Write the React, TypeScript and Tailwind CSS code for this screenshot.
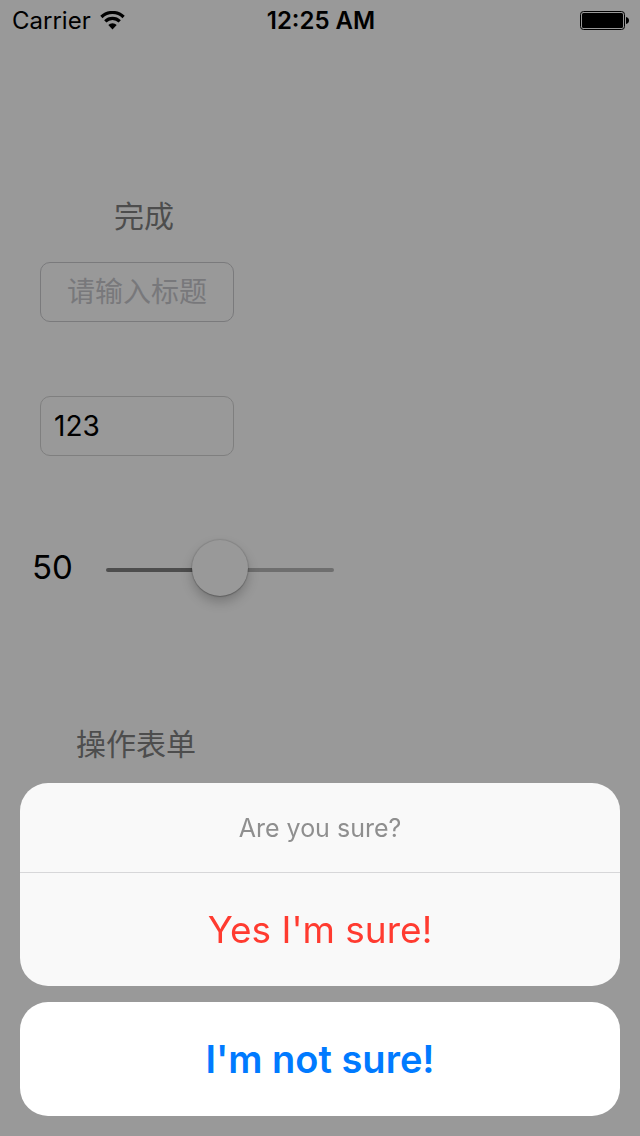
import { useState } from "react";

function WifiIcon() {
  return (
    <svg width="25" height="20" viewBox="0 0 25 20" aria-hidden="true">
      <g fill="none" stroke="#000" strokeWidth="3.200">
        <path d="M1.400 6a15.800 15.800 0 0 1 22.200 0" />
        <path d="M5.300 10.400a10.200 10.200 0 0 1 14.400 0" />
      </g>
      <path d="M8.300 14a6 6 0 0 1 8.400 0L12.500 18.500z" />
    </svg>
  );
}

function BatteryIcon() {
  return (
    <svg width="50" height="20" viewBox="0 0 50 20" aria-hidden="true">
      <rect x="0.5" y="0.5" width="44" height="18" rx="3" fill="none" stroke="#000" />
      <rect x="2" y="2" width="41" height="15" rx="1.500" />
      <path d="M46 6c2 .4 3 1.800 3 3.500s-1 3.100-3 3.500z" />
    </svg>
  );
}

function StatusBar() {
  return (
    <header className="grid h-[42px] grid-cols-3 items-center pl-3 pr-[10px] text-2xl text-black">
      <div className="flex items-center gap-[9px]">
        <span>Carrier</span>
        <WifiIcon />
      </div>
      <time className="text-center font-semibold">12:25 AM</time>
      <div className="flex justify-end">
        <BatteryIcon />
      </div>
    </header>
  );
}

function ActionSheet() {
  return (
    <div
      role="dialog"
      aria-labelledby="sheet-title"
      className="fixed inset-x-0 bottom-0 flex flex-col gap-4 p-5"
    >
      <section className="overflow-hidden rounded-[28px] bg-[#f9f9f9]">
        <h2
          id="sheet-title"
          className="border-b border-[#d7d7d9] pb-6 pt-[25px] text-center text-[25px] leading-10 text-[#8f8f8f]"
        >
          Are you sure?
        </h2>
        <button type="button" className="block h-[113px] w-full text-[37px] text-[#ff3b30]">
          Yes I'm sure!
        </button>
      </section>
      <button
        type="button"
        className="h-[114px] w-full rounded-[28px] bg-white text-[38px] font-semibold text-[#007aff]"
      >
        I'm not sure!
      </button>
    </div>
  );
}

export default function App() {
  const [title, setTitle] = useState("");
  const [text, setText] = useState("123");
  const [value, setValue] = useState(50);

  return (
    <div className="min-h-screen bg-[#999999] font-['Inter','Noto_Sans_CJK_SC',sans-serif]">
      <StatusBar />
      <main className="flex flex-col items-start px-10 pt-[154px]">
        <button type="button" className="ml-[74px] text-[30px] leading-10 text-[#4d4d4d]">
          完成
        </button>
        <input
          type="text"
          aria-label="标题"
          placeholder="请输入标题"
          value={title}
          onChange={(e) => setTitle(e.target.value)}
          className="mt-[26px] h-[60px] w-[194px] rounded-[10px] border border-[#7a7a7c] text-center text-[28px] text-black outline-none placeholder:text-[#78787b]"
        />
        <input
          type="text"
          aria-label="内容"
          value={text}
          onChange={(e) => setText(e.target.value)}
          className="mt-[74px] h-[60px] w-[194px] rounded-[10px] border border-[#7f7f7f] px-[13px] text-[28px] text-black outline-none"
        />
        <div className="-ml-2 mt-[82px] flex h-[60px] items-center">
          <label htmlFor="amount" className="w-[74px] text-[33px] text-black">
            {value}
          </label>
          <input
            id="amount"
            type="range"
            min={0}
            max={100}
            value={value}
            onChange={(e) => setValue(Number(e.target.value))}
            style={{
              backgroundImage: `linear-gradient(to right, #4d4d4d ${value}%, #6e6e6e ${value}%)`,
            }}
            className="mt-1 h-1 w-[228px] appearance-none rounded-full [&::-webkit-slider-runnable-track]:h-1 [&::-webkit-slider-thumb]:-mt-7 [&::-webkit-slider-thumb]:size-14 [&::-webkit-slider-thumb]:appearance-none [&::-webkit-slider-thumb]:rounded-full [&::-webkit-slider-thumb]:bg-[#999999] [&::-webkit-slider-thumb]:shadow-[0_0_1px_1px_rgba(0,0,0,0.1),0_1px_1px_rgba(0,0,0,0.15),0_6px_12px_rgba(0,0,0,0.22)]"
          />
        </div>
        <button type="button" className="ml-9 mt-[126px] text-[30px] leading-10 text-[#4d4d4d]">
          操作表单
        </button>
      </main>
      <ActionSheet />
    </div>
  );
}
